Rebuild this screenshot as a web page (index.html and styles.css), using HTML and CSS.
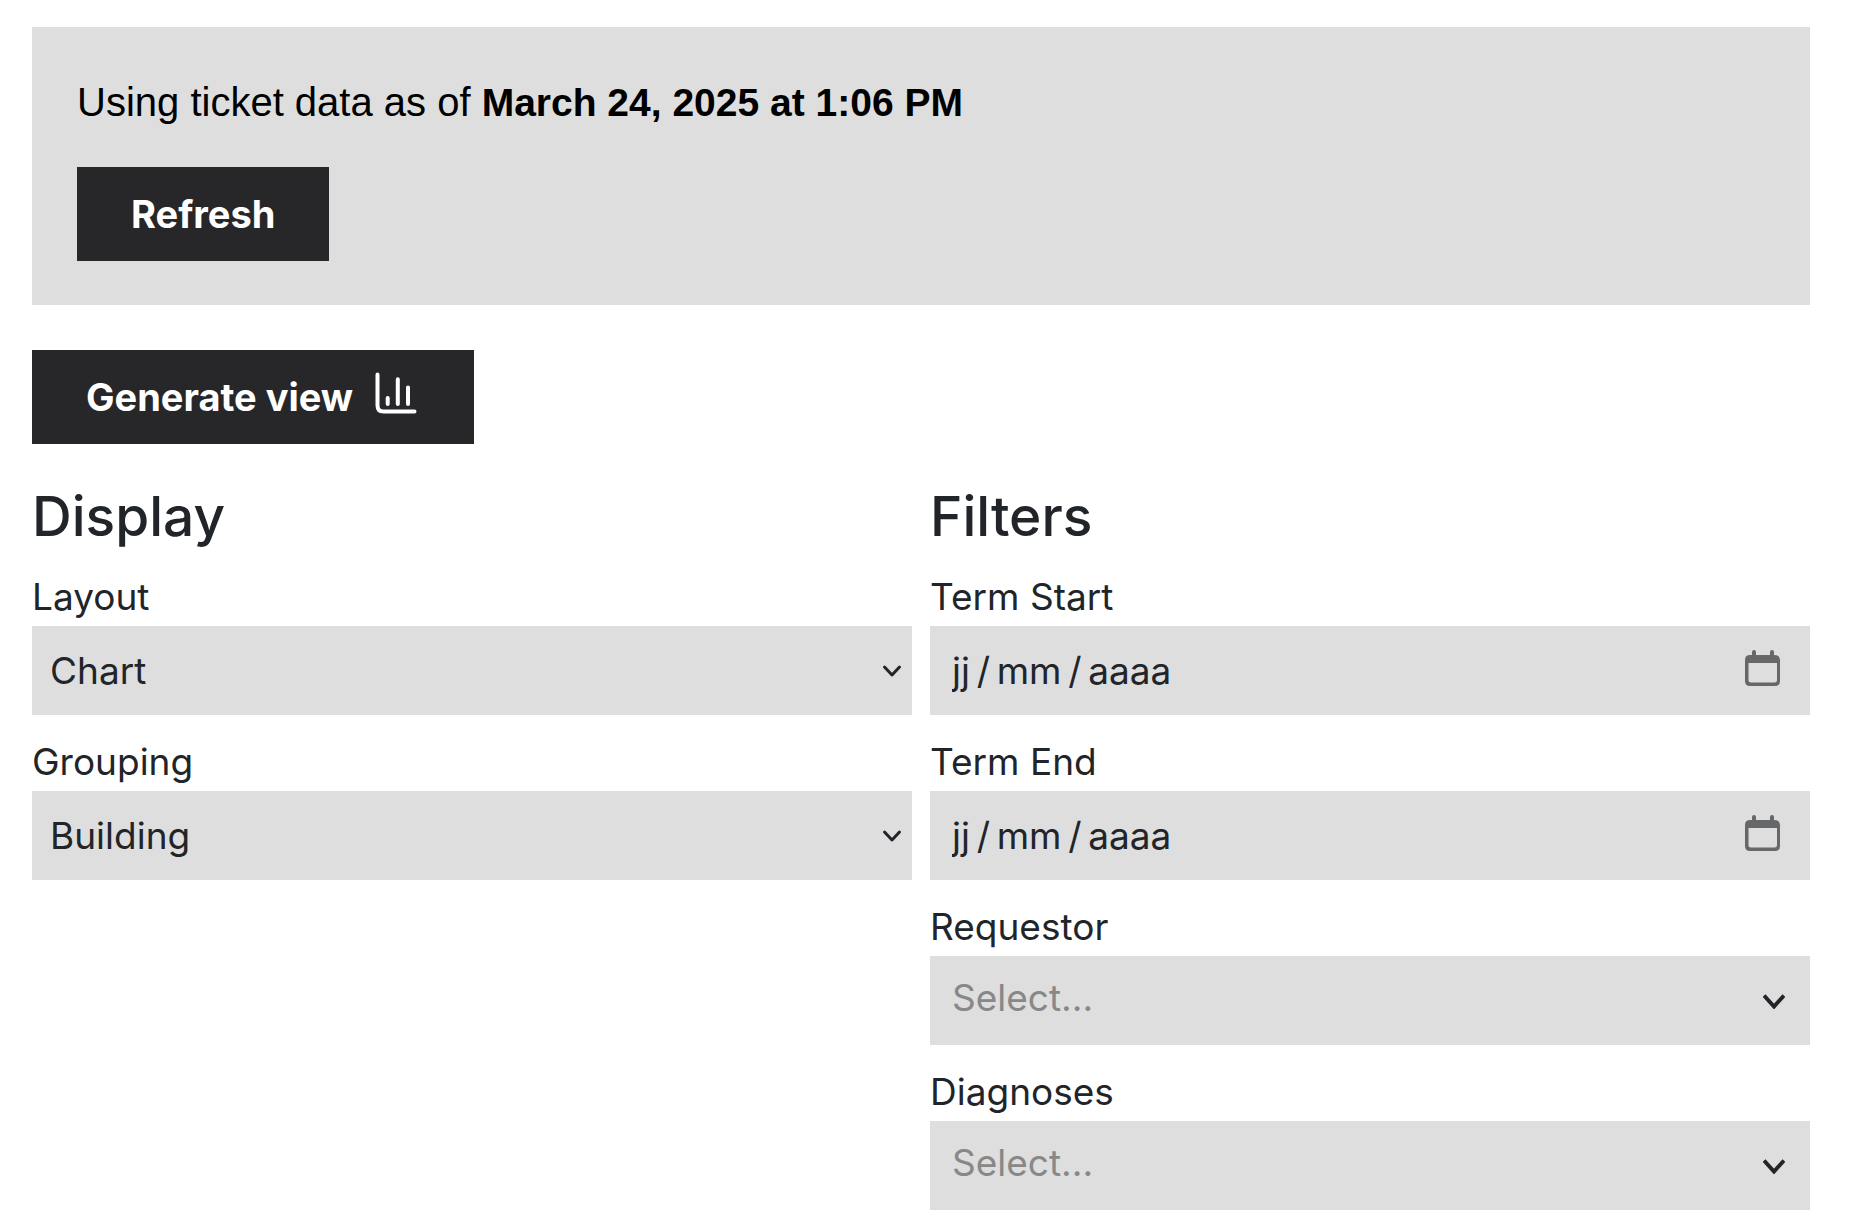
FILE: index.html
```html
<!DOCTYPE html>
<html lang="en">
<head>
  <meta charset="utf-8">
  <meta name="viewport" content="width=device-width, initial-scale=1">
  <title>Ticket report</title>
  <link rel="stylesheet" href="styles.css">
</head>
<body>
  <main class="page">
    <section class="notice">
      <p class="notice-text">Using ticket data as of <strong>March 24, 2025 at 1:06 PM</strong></p>
      <button class="button" type="button">Refresh</button>
    </section>

    <form class="report">
      <button class="button" type="button">
        <span>Generate view</span>
        <svg class="chart-icon" viewBox="0 0 42 42" aria-hidden="true"><path d="M2.5 2.5v31q0 6 6 6h31M12.7 26v6M22.8 7.3V32M33 15.5V32"/></svg>
      </button>

      <div class="columns">
        <section>
          <h2 class="heading">Display</h2>
          <div class="fields">
            <div class="field">
              <label class="label" for="layout">Layout</label>
              <div class="control">
                <select id="layout" class="input"><option>Chart</option></select>
                <svg class="caret" viewBox="0 0 20 14" aria-hidden="true"><path d="M2.5 3 10 11l7.500-8"/></svg>
              </div>
            </div>
            <div class="field">
              <label class="label" for="grouping">Grouping</label>
              <div class="control">
                <select id="grouping" class="input"><option>Building</option></select>
                <svg class="caret" viewBox="0 0 20 14" aria-hidden="true"><path d="M2.5 3 10 11l7.500-8"/></svg>
              </div>
            </div>
          </div>
        </section>

        <section>
          <h2 class="heading">Filters</h2>
          <div class="fields">
            <div class="field">
              <label class="label" for="start">Term Start</label>
              <div class="control">
                <input id="start" class="input input-wide" type="text" placeholder="jj&#8201;/&#8201;mm&#8201;/&#8201;aaaa">
                <svg class="calendar" viewBox="0 0 36 36" aria-hidden="true"><path fill-rule="evenodd" d="M7 5V2q0-2 2-2t2 2v3h14V2q0-2 2-2t2 2v3q6 0 6 5v21q0 5-5 5H5q-5 0-5-5V10q0-5 5-5zM3.500 13v17q0 2.500 2.500 2.500h23.500q2.500 0 2.500-2.500V13z"/></svg>
              </div>
            </div>
            <div class="field">
              <label class="label" for="end">Term End</label>
              <div class="control">
                <input id="end" class="input input-wide" type="text" placeholder="jj&#8201;/&#8201;mm&#8201;/&#8201;aaaa">
                <svg class="calendar" viewBox="0 0 36 36" aria-hidden="true"><path fill-rule="evenodd" d="M7 5V2q0-2 2-2t2 2v3h14V2q0-2 2-2t2 2v3q6 0 6 5v21q0 5-5 5H5q-5 0-5-5V10q0-5 5-5zM3.500 13v17q0 2.500 2.500 2.500h23.500q2.500 0 2.500-2.500V13z"/></svg>
              </div>
            </div>
            <div class="field">
              <label class="label" for="requestor">Requestor</label>
              <div class="control">
                <select id="requestor" class="input input-wide input-empty"><option>Select...</option></select>
                <svg class="chevron" viewBox="0 0 22 15" aria-hidden="true"><path d="M1 1.500 11 12.500 21 1.500"/></svg>
              </div>
            </div>
            <div class="field">
              <label class="label" for="diagnoses">Diagnoses</label>
              <div class="control">
                <select id="diagnoses" class="input input-wide input-empty"><option>Select...</option></select>
                <svg class="chevron" viewBox="0 0 22 15" aria-hidden="true"><path d="M1 1.500 11 12.500 21 1.500"/></svg>
              </div>
            </div>
          </div>
        </section>
      </div>
    </form>
  </main>
</body>
</html>
```
FILE: styles.css
```css
* {
  box-sizing: border-box;
}

body {
  margin: 0;
  background: #fff;
  color: #212529;
  font: 400 37px/60px Inter, sans-serif;
}

.page {
  padding: 27px 40px 20px 32px;
}

.notice {
  margin-bottom: 45px;
  padding: 45px 45px 44px;
  background: #dedede;
  color: #000;
}

.notice-text {
  margin: 0 0 34px;
  font-family: "Liberation Sans", Arial, sans-serif;
  font-size: 40px;
}

.notice-text strong {
  font-size: 39px;
}

.button {
  display: flex;
  align-items: center;
  gap: 22px;
  height: 94px;
  padding: 0 54px;
  border: 0;
  border-radius: 0;
  background: #272729;
  color: #fff;
  font: 700 38px/60px Inter, sans-serif;
}

.chart-icon {
  width: 42px;
  height: 42px;
  margin: 0 3px 8px 0;
  fill: none;
  stroke: #fff;
  stroke-width: 4;
  stroke-linecap: round;
}

.columns {
  display: grid;
  grid-template-columns: 1fr 1fr;
  gap: 18px;
  margin-top: 39px;
}

.heading {
  margin: 0 0 16px;
  font-size: 55px;
  font-weight: 500;
  line-height: 67px;
}

.fields {
  display: grid;
  gap: 16px;
}

.field {
  display: grid;
}

.label {
  padding-top: 2px;
  line-height: 58px;
}

.control {
  display: grid;
  align-items: center;
}

.control > * {
  grid-area: 1 / 1;
}

.input {
  width: 100%;
  height: 89px;
  padding: 0 18px;
  border: 0;
  border-radius: 0;
  background: #dedede;
  color: #212529;
  font: inherit;
  appearance: none;
}

.input-wide {
  padding: 0 22px;
}

.input-empty {
  padding-bottom: 6px;
  color: #888;
}

.input::placeholder {
  color: #212529;
  opacity: 1;
}

.caret,
.chevron,
.calendar {
  justify-self: end;
  pointer-events: none;
}

.caret {
  width: 20px;
  height: 14px;
  margin-right: 10px;
  fill: none;
  stroke: #212529;
  stroke-width: 3;
  stroke-linecap: round;
  stroke-linejoin: round;
}

.chevron {
  width: 22px;
  height: 15px;
  margin: 2px 25px 0 0;
  fill: none;
  stroke: #212529;
  stroke-width: 4;
}

.calendar {
  width: 36px;
  height: 36px;
  margin: 0 29px 6px 0;
  fill: #666769;
}
```
